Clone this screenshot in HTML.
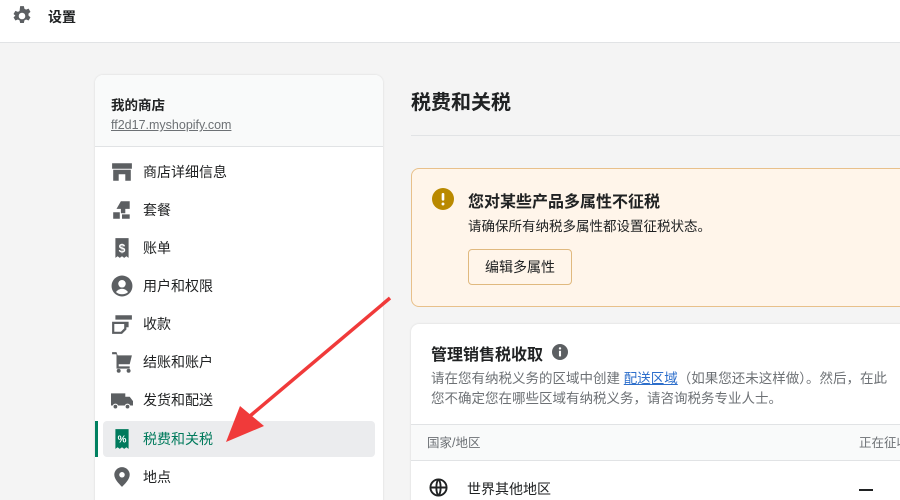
<!DOCTYPE html>
<html><head><meta charset="utf-8"><style>
*{margin:0;padding:0;box-sizing:border-box}
html,body{width:900px;height:500px;overflow:hidden}
body{background:#f4f4f4;font-family:"Liberation Sans","Noto Sans CJK SC",sans-serif;color:#202223;position:relative}
.top{position:absolute;left:0;top:0;width:900px;height:43px;background:#fff;border-bottom:1px solid #e1e3e5}
.top .t{position:absolute;left:48px;top:7px;font-size:14px;font-weight:bold}
.side{position:absolute;left:95px;top:75px;width:288px;height:440px;background:#fff;border-radius:8px;box-shadow:0 0 2px rgba(0,0,0,.12);overflow:hidden}
.sh{height:72px;background:#f9fafa;border-bottom:1px solid #e1e3e5;padding:19px 0 0 16px}
.sh b{display:block;font-size:13.5px}
.sh a{display:block;margin-top:4px;font-size:12.5px;color:#6d7175;text-decoration:underline}
.it{position:absolute;left:8px;width:272px;height:36px;border-radius:4px;font-size:14px;line-height:36px;padding-left:40px;color:#202223}
.it svg{position:absolute;left:8px;top:7px}
.act{background:#ebecee;color:#007a5c}
.bar{position:absolute;left:0;width:3px;height:36px;background:#008060}
h1{position:absolute;left:411px;top:86px;font-size:20px;font-weight:bold}
.hr{position:absolute;left:411px;top:135px;width:489px;height:1px;background:#e1e3e5}
.ban{position:absolute;left:411px;top:168px;width:500px;height:139px;background:#fff5ea;border:1px solid #e8c08a;border-radius:8px}
.ban .ti{position:absolute;left:56px;top:19px;font-size:16px;font-weight:bold}
.ban .tx{position:absolute;left:56px;top:46px;font-size:13.5px}
.btn{position:absolute;left:56px;top:80px;width:104px;height:36px;border:1px solid #e0b97f;border-radius:4px;font-size:14px;line-height:34px;text-align:center;background:#fff5ea}
.card{position:absolute;left:411px;top:324px;width:500px;height:200px;background:#fff;border-radius:8px;box-shadow:0 0 2px rgba(0,0,0,.12);overflow:hidden}
.card .ti{position:absolute;left:20px;top:17px;font-size:16px;font-weight:bold}
.card .tx{position:absolute;left:20px;top:45px;font-size:13.5px;color:#6d7175;line-height:20px;white-space:nowrap}
.card .tx a{color:#2c6ecb;text-decoration:underline}
.th{position:absolute;left:0;top:100px;width:500px;height:37px;background:#f9fafa;border-top:1px solid #e1e3e5;border-bottom:1px solid #e1e3e5;font-size:12.5px;color:#6d7175;line-height:36px}
</style></head><body>
<div class="top">
<svg style="position:absolute;left:11px;top:5px" width="22" height="22" viewBox="0 0 20 20"><path fill="#5c5f62" d="M8.3 1h3.4l.5 2.4 1.5.8 2.3-.9 1.7 2.9-1.8 1.6v1.8l1.8 1.6-1.7 2.9-2.3-.9-1.5.8-.5 2.4H8.3l-.5-2.4-1.5-.8-2.3.9-1.7-2.9 1.8-1.6V9.8L2.3 8.2 4 5.3l2.3.9 1.5-.8zM10 7a3 3 0 100 6 3 3 0 000-6z"/></svg>
<div class="t">设置</div></div>

<div class="side">
<div class="sh"><b>我的商店</b><a>ff2d17.myshopify.com</a></div>
<div class="it" style="top:79px"><svg width="22" height="22" viewBox="0 0 20 20"><path fill="#5c5f62" d="M1 2h18v5H1zM2 8h16v10h-5v-6H7v6H2z"/></svg>商店详细信息</div>
<div class="it" style="top:117px"><svg width="22" height="22" viewBox="0 0 20 20"><path fill="#5c5f62" d="M9 2h8v7h-4v4H9V9H5zM2 12h6v6H2zM10 14h7v4h-7z"/></svg>套餐</div>
<div class="it" style="top:155px"><svg width="22" height="22" viewBox="0 0 20 20"><path fill="#5c5f62" d="M4 1h12v18l-2-1.5-2 1.5-2-1.5-2 1.5-2-1.5-2 1.5z"/><text x="10" y="14" font-size="11" font-weight="bold" fill="#fff" text-anchor="middle" font-family="Liberation Sans">$</text></svg>账单</div>
<div class="it" style="top:193px"><svg width="22" height="22" viewBox="0 0 20 20"><circle cx="10" cy="10" r="9.5" fill="#5c5f62"/><circle cx="10" cy="8" r="3.4" fill="#fff"/><path fill="#fff" d="M4.5 15.5c1.5-2 3.5-3 5.5-3s4 1 5.5 3c-1.5 1.5-3.5 2-5.5 2s-4-.5-5.5-2z"/></svg>用户和权限</div>
<div class="it" style="top:231px"><svg width="22" height="22" viewBox="0 0 20 20"><path fill="#5c5f62" d="M4 2h15v4H4zM1 8h15v5h-2v2l-4 4H1zM3 10v7h6l3-3v-4z"/></svg>收款</div>
<div class="it" style="top:269px"><svg width="22" height="22" viewBox="0 0 20 20"><path fill="#5c5f62" d="M1 1h4l1 3h13l-2 8H7v2h10v2H5V3H1z"/><circle cx="7" cy="18" r="1.8" fill="#5c5f62"/><circle cx="16" cy="18" r="1.8" fill="#5c5f62"/></svg>结账和账户</div>
<div class="it" style="top:307px"><svg width="22" height="22" viewBox="0 0 20 20"><path fill="#5c5f62" d="M0 4h13v11H0zM13 7h4l3 4v4h-7z"/><circle cx="4" cy="16" r="2.2" fill="#5c5f62" stroke="#fff"/><circle cx="15" cy="16" r="2.2" fill="#5c5f62" stroke="#fff"/></svg>发货和配送</div>
<div class="bar" style="top:346px"></div>
<div class="it act" style="top:346px"><svg width="22" height="22" viewBox="0 0 20 20"><path fill="#007a5c" d="M4 1h12v18l-2-1.5-2 1.5-2-1.5-2 1.5-2-1.5-2 1.5z"/><text x="10" y="13" font-size="9" font-weight="bold" fill="#fff" text-anchor="middle" font-family="Liberation Sans">%</text></svg>税费和关税</div>
<div class="it" style="top:384px"><svg width="22" height="22" viewBox="0 0 20 20"><path fill="#5c5f62" d="M10 1a7 7 0 017 7c0 4-4 8-7 11-3-3-7-7-7-11a7 7 0 017-7z"/><circle cx="10" cy="8" r="2.5" fill="#fff"/></svg>地点</div>
</div>

<h1>税费和关税</h1>
<div class="hr"></div>

<div class="ban">
<svg style="position:absolute;left:20px;top:19px" width="22" height="22" viewBox="0 0 20 20"><circle cx="10" cy="10" r="10" fill="#b98900"/><rect x="8.8" y="4.5" width="2.4" height="7" rx="1" fill="#fff"/><circle cx="10" cy="14.5" r="1.3" fill="#fff"/></svg>
<div class="ti">您对某些产品多属性不征税</div>
<div class="tx">请确保所有纳税多属性都设置征税状态。</div>
<div class="btn">编辑多属性</div>
</div>

<div class="card">
<div class="ti">管理销售税收取</div>
<svg style="position:absolute;left:141px;top:20px" width="16" height="16" viewBox="0 0 20 20"><circle cx="10" cy="10" r="10" fill="#5c5f62"/><rect x="8.7" y="8.5" width="2.6" height="7" fill="#fff"/><circle cx="10" cy="5.5" r="1.5" fill="#fff"/></svg>
<div class="tx">请在您有纳税义务的区域中创建 <a>配送区域</a>（如果您还未这样做）。然后，在此<br>您不确定您在哪些区域有纳税义务，请咨询税务专业人士。</div>
<div class="th"><span style="position:absolute;left:16px">国家/地区</span><span style="position:absolute;left:448px">正在征收</span></div>
<svg style="position:absolute;left:18px;top:154px" width="19" height="19" viewBox="0 0 20 20"><g fill="none" stroke="#202223" stroke-width="2"><circle cx="10" cy="10" r="8.5"/><path d="M1.5 10h17M10 1.5c-3 3-3 14 0 17M10 1.5c3 3 3 14 0 17"/></g></svg>
<div style="position:absolute;left:56px;top:155px;font-size:14px">世界其他地区</div>
<div style="position:absolute;left:448px;top:165px;width:14px;height:1.5px;background:#202223"></div>
</div>

<svg style="position:absolute;left:0;top:0" width="900" height="500"><path d="M390 298 L250 416" stroke="#f03a3a" stroke-width="3.5"/><path d="M226 442 L240 406 L264 426 Z" fill="#f03a3a"/></svg>
</body></html>
